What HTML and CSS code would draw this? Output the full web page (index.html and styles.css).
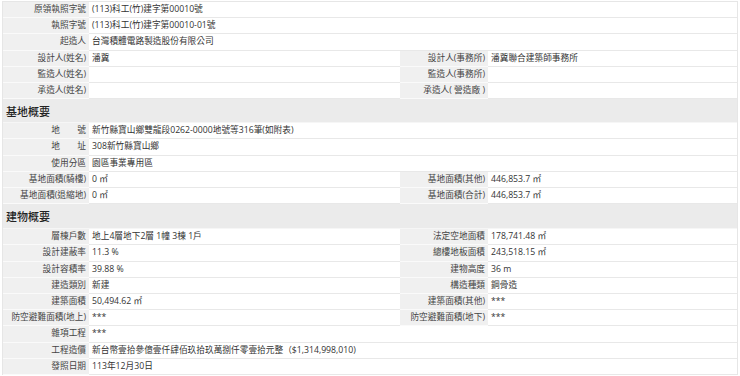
FILE: index.html
```html
<!DOCTYPE html>
<html lang="zh-Hant">
<head>
<meta charset="utf-8">
<title>建照資料</title>
<link rel="stylesheet" href="styles.css">
</head>
<body>
<table class="info">
  <colgroup>
    <col class="c-lb1"><col class="c-v1"><col class="c-lb2"><col class="c-v2">
  </colgroup>
  <tbody>
    <tr><td class="lb">原領執照字號</td><td class="val" colspan="3">(113)科工(竹)建字第00010號</td></tr>
    <tr><td class="lb">執照字號</td><td class="val" colspan="3">(113)科工(竹)建字第00010-01號</td></tr>
    <tr><td class="lb">起造人</td><td class="val" colspan="3">台灣積體電路製造股份有限公司</td></tr>
    <tr><td class="lb">設計人(姓名)</td><td class="val">潘冀</td><td class="lb">設計人(事務所)</td><td class="val">潘冀聯合建築師事務所</td></tr>
    <tr><td class="lb">監造人(姓名)</td><td class="val"></td><td class="lb">監造人(事務所)</td><td class="val"></td></tr>
    <tr><td class="lb">承造人(姓名)</td><td class="val"></td><td class="lb">承造人( 營造廠 )</td><td class="val"></td></tr>
    <tr><th class="sec" colspan="4">基地概要</th></tr>
    <tr><td class="lb">地　　號</td><td class="val" colspan="3">新竹縣寶山鄉雙龍段0262-0000地號等316筆(如附表)</td></tr>
    <tr><td class="lb">地　　址</td><td class="val" colspan="3">308新竹縣寶山鄉</td></tr>
    <tr><td class="lb">使用分區</td><td class="val" colspan="3">園區事業專用區</td></tr>
    <tr><td class="lb">基地面積(騎樓)</td><td class="val">0 ㎡</td><td class="lb">基地面積(其他)</td><td class="val">446,853.7 ㎡</td></tr>
    <tr><td class="lb">基地面積(退縮地)</td><td class="val">0 ㎡</td><td class="lb">基地面積(合計)</td><td class="val">446,853.7 ㎡</td></tr>
    <tr><th class="sec sec2" colspan="4">建物概要</th></tr>
    <tr><td class="lb">層棟戶數</td><td class="val">地上4層地下2層 1幢 3棟 1戶</td><td class="lb">法定空地面積</td><td class="val">178,741.48 ㎡</td></tr>
    <tr><td class="lb">設計建蔽率</td><td class="val">11.3 %</td><td class="lb">總樓地板面積</td><td class="val">243,518.15 ㎡</td></tr>
    <tr><td class="lb">設計容積率</td><td class="val">39.88 %</td><td class="lb">建物高度</td><td class="val">36 m</td></tr>
    <tr><td class="lb">建造類別</td><td class="val">新建</td><td class="lb">構造種類</td><td class="val">鋼骨造</td></tr>
    <tr><td class="lb">建築面積</td><td class="val">50,494.62 ㎡</td><td class="lb">建築面積(其他)</td><td class="val">***</td></tr>
    <tr><td class="lb">防空避難面積(地上)</td><td class="val">***</td><td class="lb">防空避難面積(地下)</td><td class="val">***</td></tr>
    <tr><td class="lb">雜項工程</td><td class="val" colspan="3">***</td></tr>
    <tr><td class="lb">工程造價</td><td class="val" colspan="3">新台幣壹拾參億壹仟肆佰玖拾玖萬捌仟零壹拾元整（$1,314,998,010)</td></tr>
    <tr><td class="lb">發照日期</td><td class="val" colspan="3">113年12月30日</td></tr>
  </tbody>
</table>
</body>
</html>
```

FILE: styles.css
```css
html, body {
  margin: 0;
  padding: 0;
  background: #ffffff;
}
body {
  padding: 1px 2px 0 2px;
  font-family: "Open Sans", "Noto Sans CJK TC", sans-serif;
  font-size: 8.7px;
  color: #333333;
}
.info {
  width: 100%;
  table-layout: fixed;
  border-collapse: separate;
  border-spacing: 0;
  border: 1px solid #e6e6e6;
  border-bottom: none;
}
.c-lb1 { width: 86px; }
.c-v1 { width: 311px; }
.c-lb2 { width: 88px; }
.info td {
  height: 15.2px;
  line-height: 15.2px;
  padding: 0 3px;
  border-bottom: 1px solid #e8e8e8;
  white-space: nowrap;
  overflow: hidden;
  vertical-align: middle;
}
.info td.lb {
  background: #f0f0f0;
  border-bottom-color: #fafafa;
  text-align: right;
  color: #444444;
}
.info td.val {
  background: #ffffff;
  text-align: left;
  padding-left: 3px;
}
.info th.sec {
  height: 23px;
  padding: 0 3px;
  background: #ebebeb;
  border-bottom: 1px solid #f6f6f6;
  text-align: left;
  font-size: 11px;
  font-weight: 500;
  color: #222222;
  vertical-align: middle;
}
.info th.sec2 {
  height: 24px;
}
```
